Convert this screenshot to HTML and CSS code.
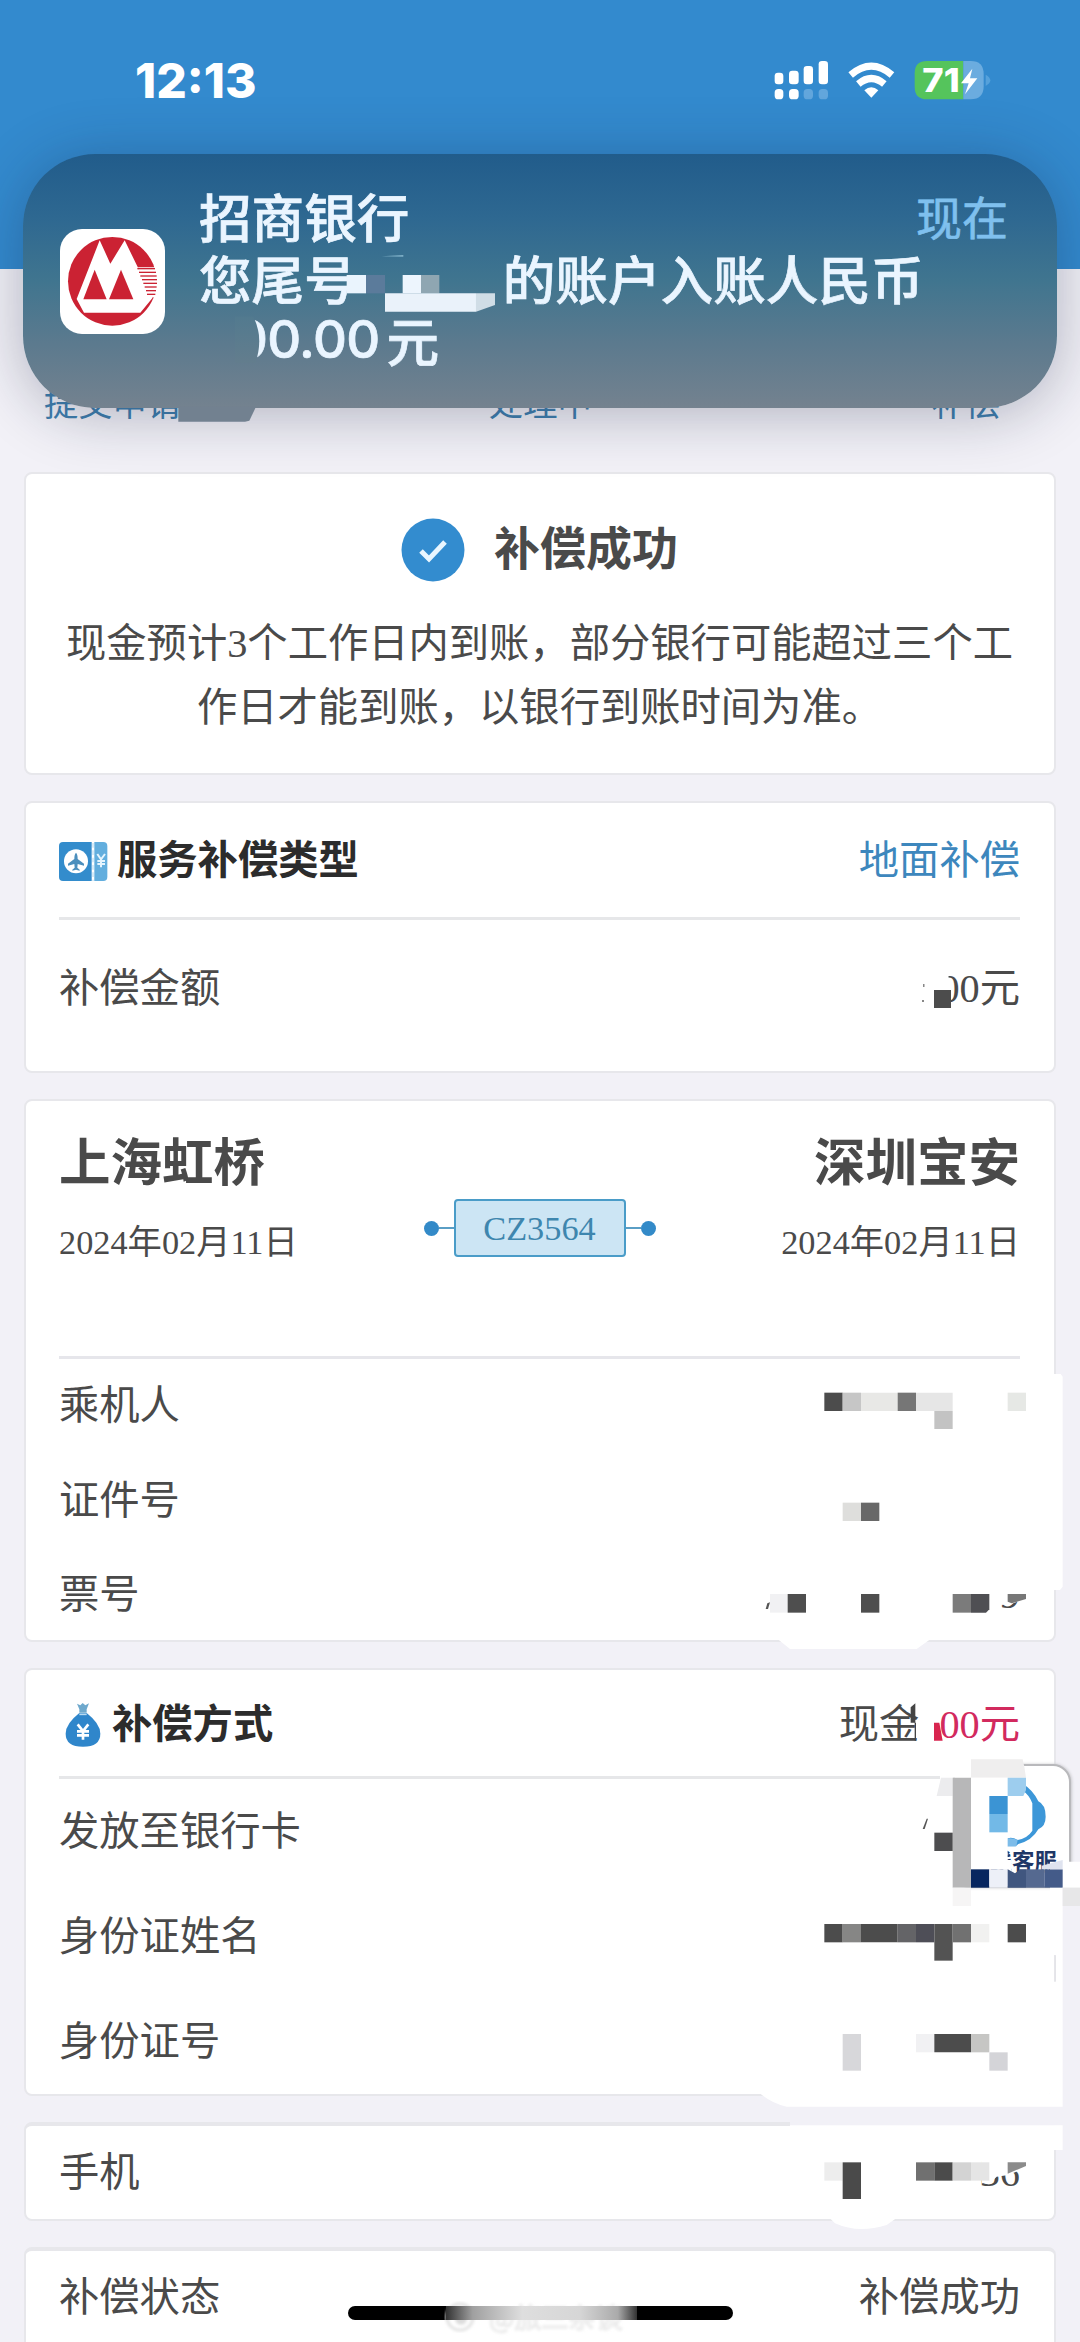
FILE: index.html
```html
<!DOCTYPE html>
<html lang="zh-CN">
<head>
<meta charset="utf-8">
<title>服务补偿</title>
<link rel="stylesheet" href="styles.css">
</head>
<body>
<div class="screen">
  <header class="topbar">
    <div class="clock">12:13</div>
    <svg class="status-icons" viewBox="100 60 660 120" width="220" height="40">
      <g fill="#fff">
        <rect x="105" y="98" width="26" height="35" rx="10"/><rect x="148" y="92" width="29" height="41" rx="10"/>
        <rect x="192" y="78" width="28" height="55" rx="10"/><rect x="237" y="63" width="28" height="70" rx="10"/>
        <rect x="105" y="147" width="26" height="31" rx="11"/><rect x="148" y="147" width="29" height="31" rx="11"/>
      </g>
      <g fill="#62a6dc"><rect x="192" y="147" width="28" height="31" rx="11"/><rect x="237" y="147" width="28" height="31" rx="11"/></g>
      <g fill="none" stroke="#fff" stroke-width="21">
        <path d="M333 105Q395 52 457 105"/><path d="M356 132Q395 99 434 132"/>
      </g>
      <path d="M374 151Q395 133 416 151L395 173Z" fill="#fff"/>
      <path d="M562 63H671V178H562Q525 178 525 141V100Q525 63 562 63Z" fill="#55c45c"/>
      <path d="M671 63H693Q732 63 732 102V139Q732 178 693 178H671Z" fill="#6bacdf"/>
      <path d="M738 104Q752 112 752 121Q752 130 738 138Z" fill="#55a1db"/>
      <text x="548" y="157" class="battery-text" textLength="112" lengthAdjust="spacingAndGlyphs">71</text>
      <path d="M698 86L664 130H687L676 163L713 115H691Z" fill="#fff"/>
    </svg>
  </header>

  <nav class="steps"><span>提交申请</span><span class="current">处理中</span><span>补偿</span></nav>

  <main class="cards">
    <section class="card result">
      <div class="result-head">
        <svg width="64" height="64" viewBox="0 0 64 64"><circle cx="32" cy="32" r="31.5" fill="#338ccf"/><path d="M20 33L28 41L44 24" fill="none" stroke="#e9f6ff" stroke-width="5"/></svg>
        <h1>补偿成功</h1>
      </div>
      <p>现金预计3个工作日内到账，部分银行可能超过三个工作日才能到账，以银行到账时间为准。</p>
    </section>

    <section class="card type">
      <div class="card-head">
        <svg class="ticket" width="49" height="39" viewBox="0 0 147 117">
          <path d="M12 0H98V117H12Q0 117 0 105V12Q0 0 12 0Z" fill="#338ccc"/>
          <path d="M106 0H133Q145 0 145 12V105Q145 117 133 117H106Z" fill="#62aede"/>
          <path d="M102 3V117" stroke="#cfe7f7" stroke-width="5" stroke-dasharray="14 8"/>
          <circle cx="51" cy="58" r="36" fill="#fff"/>
          <path d="M51 32Q56 36 56 51L75 65V71L56 66L55 77L62 83V86L51 83L40 86V83L47 77L46 66L27 71V65L46 51Q46 36 51 32Z" fill="#4c8fbd"/>
          <path d="M115 36L126 52L138 36M126 52V76M115 57H138M115 66H138" fill="none" stroke="#e4f4fe" stroke-width="6"/>
        </svg>
        <h2>服务补偿类型</h2>
        <span class="value link">地面补偿</span>
      </div>
      <div class="row"><span>补偿金额</span><span class="value">00元</span></div>
    </section>

    <section class="card flight">
      <div class="route">
        <div class="stop"><strong>上海虹桥</strong><time>2024年02月11日</time></div>
        <div class="flight-no"><i></i><b></b><span>CZ3564</span><b></b><i></i></div>
        <div class="stop end"><strong>深圳宝安</strong><time>2024年02月11日</time></div>
      </div>
      <div class="row"><span>乘机人</span></div>
      <div class="row"><span>证件号</span></div>
      <div class="row"><span>票号</span><span class="value">9</span></div>
    </section>

    <section class="card method">
      <div class="card-head">
        <svg class="bag" width="36" height="44" viewBox="0 0 108 132">
          <path d="M36 2L46 7L53 0L61 7L72 1L65 19V29H43V19Z" fill="#6fa9cd"/>
          <path d="M43 30H65Q106 62 106 92Q106 131 54 131Q2 131 2 92Q2 62 43 30Z" fill="#2f86cb"/>
          <path d="M43 34H65" stroke="#b9daf0" stroke-width="5"/>
          <path d="M38 64L54 84L70 64M54 84V110M36 85H72M36 97H72" fill="none" stroke="#fff" stroke-width="8"/>
        </svg>
        <h2>补偿方式</h2>
        <span class="value">现金<span class="amount">00元</span></span>
      </div>
      <div class="row"><span>发放至银行卡</span></div>
      <div class="row"><span>身份证姓名</span></div>
      <div class="row"><span>身份证号</span></div>
    </section>

    <section class="card phone"><div class="row"><span>手机</span><span class="value">36</span></div></section>
    <section class="card state"><div class="row"><span>补偿状态</span><span class="value">补偿成功</span></div></section>
  </main>

  <aside class="service">
    <svg width="60" height="70" viewBox="780 350 180 210">
      <path d="M855 360Q888 380 904 414Q926 424 926 460Q926 488 904 498Q885 532 844 542L836 549H805V528Q822 518 842 530Q872 524 886 502V420Q878 396 855 380Z" fill="#3d97d8"/>
      <path d="M805 528Q822 520 842 530L838 549H805Z" fill="#7dbce9"/>
    </svg>
    <span>线客服</span>
  </aside>

  <section class="notice">
    <svg class="bank" width="105" height="105" viewBox="0 0 315 315">
      <rect width="315" height="315" rx="66" fill="#fff"/>
      <circle cx="157" cy="157" r="133" fill="#cb2233"/>
      <path d="M119 34L151 104L194 34L278 206L241 251H72L50 210Z" fill="#fff"/>
      <path d="M104 122L140 211H70Z" fill="#cb2233"/><path d="M183 122L220 211H147Z" fill="#cb2233"/>
      <path d="M234 115H296V205H264Z" fill="#fff"/>
      <g stroke="#cb2233" stroke-width="4"><path d="M232 119H285"/><path d="M237 130H288"/><path d="M241 141H290"/><path d="M246 152H291"/><path d="M250 163H291"/><path d="M254 174H290"/><path d="M258 185H288"/><path d="M261 196H286"/></g>
    </svg>
    <div class="notice-text">
      <div class="notice-title"><span>招商银行</span><span class="now">现在</span></div>
      <div class="notice-line"><span>您尾号</span><span>的账户入账人民币</span></div>
      <div class="notice-line sum"><span class="digits">00.00</span><span>元</span></div>
    </div>
  </section>

  <svg class="mosaic" width="1080" height="2342" viewBox="0 0 1080 2342">
    <defs><linearGradient id="bar" x1="0" x2="1"><stop offset="0" stop-color="#333"/><stop offset=".14" stop-color="#a0a0a0"/><stop offset=".4" stop-color="#dedede"/><stop offset=".7" stop-color="#d6d6d6"/><stop offset=".9" stop-color="#aaa"/><stop offset="1" stop-color="#333"/></linearGradient>
    <linearGradient id="smear" x1="0" x2="0" y1="0" y2="1"><stop offset="0" stop-color="#527a8f"/><stop offset="1" stop-color="#637d8d"/></linearGradient>
    <filter id="soft"><feGaussianBlur stdDeviation="1.5"/></filter></defs>
    <!-- notification -->
    <g transform="translate(40 150) scale(.33333)">
      <path d="M585 500H640Q672 565 646 640H585Z" fill="url(#smear)"/>
      <path d="M920 375H978V430H920Z" fill="#eaf4fd"/><path d="M978 375H1035V430H978Z" fill="#5b7b9b"/>
      <path d="M1088 375H1143V430H1088Z" fill="#edf5fd"/><path d="M1143 375H1198V430H1143Z" fill="#8fa6b2"/>
      <path d="M1035 430H1308V485H1035Z" fill="#eaf2fa"/><path d="M1308 430H1365V465L1308 485Z" fill="#d0dde6"/>
      <path d="M1025 319L1090 315V320Z" fill="#7fb0c8"/>
      <path d="M415 770H648L628 812L615 815H415Z" fill="#728190"/>
    </g>
    <!-- compensation amount -->
    <path d="M930 965H945Q953 984 948 1006H930Z" fill="#fff"/><path d="M934 990H951V1008H934Z" fill="#4c4c4c"/>
    <path d="M923 984h1.500v3h-1.500zM922 1000h2v2h-2z" fill="#888"/>
    <!-- passenger -->
    <g transform="translate(740 1350) scale(.33333)">
      <path d="M900 72H962L968 80V710L960 720H900ZM110 865H575L530 897H150Z" fill="#fff"/>
      <path d="M253 128H308V183H253Z" fill="#4c4c4c"/><path d="M308 128H363V183H308Z" fill="#c6c6c6"/><path d="M363 128H473V183H363Z" fill="#e8e8e6"/><path d="M473 128H528V183H473Z" fill="#767676"/><path d="M528 128H638V183H528Z" fill="#e6e6e6"/><path d="M583 183H638V237H583Z" fill="#c3c3c3"/><path d="M803 128H858V183H803Z" fill="#e6e8e5"/>
      <path d="M308 458H363V513H308Z" fill="#dededc"/><path d="M363 458H418V513H363Z" fill="#686868"/>
      <path d="M90 732H143V788H90Z" fill="#f1f1f3"/><path d="M143 732H198V788H143Z" fill="#4e4e4e"/><path d="M363 732H418V788H363Z" fill="#4e4e4e"/><path d="M638 732H693V788H638Z" fill="#7b7b7b"/><path d="M693 732H748V778L738 788H693Z" fill="#4f4f53"/>
      <path d="M82 760L90 757L84 777H77Z" fill="#555"/>
      <path d="M770 670H860V745L828 757L806 765L770 764Z" fill="#fff"/><path d="M803 732H858V747L815 760L803 755Z" fill="#777"/>
    </g>
    <!-- payout card and service entry -->
    <g transform="translate(740 1660) scale(.33333)">
      <path d="M512 142L526 130V188H528V242H524V188H512Z" fill="#444"/><path d="M582 188H598L608 242H582Z" fill="#d8254f"/>
      <path d="M930 605H1020V683H968V1340H140Q95 1330 60 1300H930V965H948V885H930Z" fill="#fff"/>
      <path d="M946 888V962" stroke="#e4e4e8" stroke-width="4"/>
      <path d="M600 298H693V353H640V683H600Z" fill="#fff"/>
      <path d="M693 298H848L853 320L858 353H693Z" fill="#efeeee"/>
      <path d="M693 353H803V628H693Z" fill="#fff"/>
      <path d="M603 353H638V408H590Z" fill="#ececee"/><path d="M638 353H693V683H638Z" fill="#b7b7b8"/>
      <path d="M803 353H858V390L850 408H803Z" fill="#9dcdee"/><path d="M748 408H803V462H748Z" fill="#3b94d4"/><path d="M748 462H803V517H748Z" fill="#72b9e7"/>
      <path d="M700 560H790V628H700ZM790 600H815V640H790Z" fill="#fff"/>
      <path d="M693 628H748V683H693Z" fill="#07265f"/><path d="M748 628H803V683H748Z" fill="#edf0f8"/><path d="M803 628L825 640L840 628H858V683H803Z" fill="#40567f"/><path d="M858 628H913V683H858Z" fill="#556990"/><path d="M913 628H968V683H913Z" fill="#445b89"/><path d="M905 617L968 600V628H905Z" fill="#dfe3ef"/>
      <path d="M968 683H1020V738H968Z" fill="#e7e7e8"/><path d="M638 683H693V738H638Z" fill="#f6f5f5"/>
      <path d="M560 476L564 476L554 507H548Z" fill="#555"/><path d="M583 518H638V573H583Z" fill="#4d4d4f"/>
      <path d="M253 792H308V847H253Z" fill="#4c4c4c"/><path d="M308 792H363V847H308Z" fill="#868685"/><path d="M363 792H473V847H363Z" fill="#4c4c4c"/><path d="M473 792H528V847H473Z" fill="#646467"/><path d="M528 792H583V847H528Z" fill="#4e4e57"/><path d="M583 792H638V902H583Z" fill="#535353"/><path d="M638 792H693V847H638Z" fill="#717171"/><path d="M693 792H748V847H693Z" fill="#f1f1f0"/><path d="M803 792H858V847H803Z" fill="#4c4c4c"/>
      <path d="M308 1122H363V1232H308Z" fill="#d7d7da"/><path d="M528 1122H583V1177H528Z" fill="#f1f1f3"/><path d="M583 1122H693V1177H583Z" fill="#4c4c4c"/><path d="M693 1122H748V1177H693Z" fill="#c6c6c4"/><path d="M748 1177H803V1232H748Z" fill="#d4d4d8"/>
    </g>
    <!-- phone -->
    <g transform="translate(740 2100) scale(.33333)">
      <path d="M150 58H968V77H150Z" fill="#f2f1f7"/>
      <path d="M150 76H968V150H930V90H150ZM265 350H475L440 375Q355 402 285 370Z" fill="#fff"/>
      <path d="M725 160H870V198L805 225L770 230L750 250H725Z" fill="#fff"/>
      <path d="M253 187H308V242H253Z" fill="#ededed"/><path d="M308 187H363V297H308Z" fill="#4a4a4a"/><path d="M528 187H583V242H528Z" fill="#707070"/><path d="M583 187H638V242H583Z" fill="#4b4b4b"/><path d="M638 187H693V242H638Z" fill="#d3d3d3"/><path d="M693 187H748V242H693Z" fill="#e5e5e5"/><path d="M803 187H858V198L803 221Z" fill="#8b8b8b"/>
    </g>
    <!-- home indicator -->
    <rect x="348" y="2306" width="385" height="14" rx="7"/>
    <g filter="url(#soft)"><circle cx="460" cy="2317" r="13" fill="#fff" stroke="#e2e2e2" stroke-width="3"/><circle cx="461" cy="2319" r="6" fill="#ddd"/></g>
    <text x="489" y="2328" class="watermark" filter="url(#soft)">@旅三杂谈</text>
    <path d="M446 2306H637V2320H446Z" fill="url(#bar)"/>
  </svg>
</div>
</body>
</html>
```

FILE: styles.css
```css
* { box-sizing: border-box; margin: 0; padding: 0; }
body { background: #f2f1f7; }
.screen {
  position: relative;
  width: 1080px;
  height: 2342px;
  overflow: hidden;
  background: #f2f1f7;
  color: #4a4a4a;
  font: 40.3px/60px "Liberation Serif", "Noto Sans CJK SC", serif;
}
.topbar {
  display: flex;
  justify-content: space-between;
  height: 269px;
  padding: 60px 87px 0 135px;
  background: #338ace;
}
.clock { font: 800 48px/42px Inter, sans-serif; color: #fff; }
.battery-text { font: 800 98px Inter, sans-serif; fill: #fff; }
.steps {
  display: flex;
  justify-content: space-between;
  height: 203px;
  padding: 105px 80px 0 44px;
  color: #3f7fae;
  font-size: 34.3px;
}
.steps .current { margin-right: 32px; }
.cards { display: flex; flex-direction: column; gap: 26px; padding: 0 24px; }
.card {
  padding: 0 34px 0 33px;
  background: #fff;
  border: 2px solid #e7e7eb;
  border-radius: 8px;
}
.row { display: flex; justify-content: space-between; align-items: center; }
.value { margin-left: auto; }
.link { color: #3d87bd; }
.amount { margin-left: 20px; color: #d22a5e; }
.card-head { display: flex; align-items: center; border-bottom: 3px solid #e6e7e9; }
.card-head h2 { font-size: 40.3px; color: #2c2c2c; font-weight: 700; }

.result { height: 303px; padding-top: 44px; text-align: center; }
.result-head { display: flex; justify-content: center; align-items: center; gap: 29px; height: 64px; }
.result-head h1 { font-size: 46px; }
.result p { margin: 30px 0 0; line-height: 64px; }

.type { height: 272px; }
.type .card-head { height: 117px; padding-top: 2px; }
.ticket { margin-right: 9px; }
.type .row { height: 138px; }

.flight { height: 543px; }
.route { display: flex; justify-content: space-between; height: 258px; padding-top: 33px; border-bottom: 3px solid #e6e6eb; }
.stop { display: flex; flex-direction: column; gap: 18px; font-size: 34.300px; }
.stop strong { font-size: 51.500px; }
.stop.end { align-items: flex-end; }
.flight-no { display: flex; align-items: center; height: 58px; margin-top: 65px; }
.flight-no i { width: 15px; height: 15px; border-radius: 50%; background: #338ac8; }
.flight-no b { width: 15px; height: 2px; background: #5a9ec5; }
.flight-no span {
  width: 172px;
  height: 58px;
  border: 2px solid #4a9cc8;
  border-radius: 4px;
  background: #cce5f4;
  color: #3e86ae;
  font-size: 34.3px;
  line-height: 54px;
  text-align: center;
}
.flight .row { height: 94.500px; }

.method { height: 428px; }
.method .card-head { height: 109px; padding-top: 4px; }
.bag { margin: 0 11px 0 6px; }
.method .row { height: 105.300px; }

.phone { height: 99px; border-top-width: 4px; }
.phone .row { height: 94px; }
.state { height: 130px; border-top-width: 4px; }
.state .row { height: 94px; }

.service {
  position: absolute;
  left: 952px;
  top: 1764px;
  display: flex;
  flex-direction: column;
  align-items: flex-end;
  width: 119px;
  height: 124px;
  padding: 14px 12px 0 0;
  background: #fff;
  border: 2px solid #b9b9bc;
  border-radius: 18px;
  box-shadow: 1px 0 3px #c8c8cc;
  color: #1f3767;
  font-size: 22.500px;
  font-weight: 700;
  line-height: 26px;
}

.notice {
  position: absolute;
  left: 23px;
  top: 154px;
  display: flex;
  align-items: center;
  gap: 34px;
  width: 1034px;
  height: 254px;
  padding: 0 49px 0 37px;
  border-radius: 72px;
  background: linear-gradient(#215c8b, #2e6891 25%, #40758f 50%, #5c7a8e 75%, #74828f);
  box-shadow: 0 6px 60px rgba(20, 30, 60, .3);
  color: #eaf5ff;
  font: 500 52.600px/62px "Noto Sans CJK SC", sans-serif;
  -webkit-text-stroke: .7px;
}
.bank { flex: none; }
.notice-text { flex: 1; padding-bottom: 8px; }
.notice-title, .notice-line { display: flex; height: 62px; }
.notice-title { justify-content: space-between; }
.now { color: #7fc0ee; font-size: 46px; font-weight: 400; }
.notice-line { gap: 146px; }
.sum { gap: 7px; padding-left: 35px; }
.digits { font-family: Inter, sans-serif; letter-spacing: -.7px; }
.mosaic { position: absolute; left: 0; top: 0; }
.watermark { font: 27px "Noto Sans CJK SC", sans-serif; fill: #fff; stroke: #e2e2e2; stroke-width: 1px; }
```
